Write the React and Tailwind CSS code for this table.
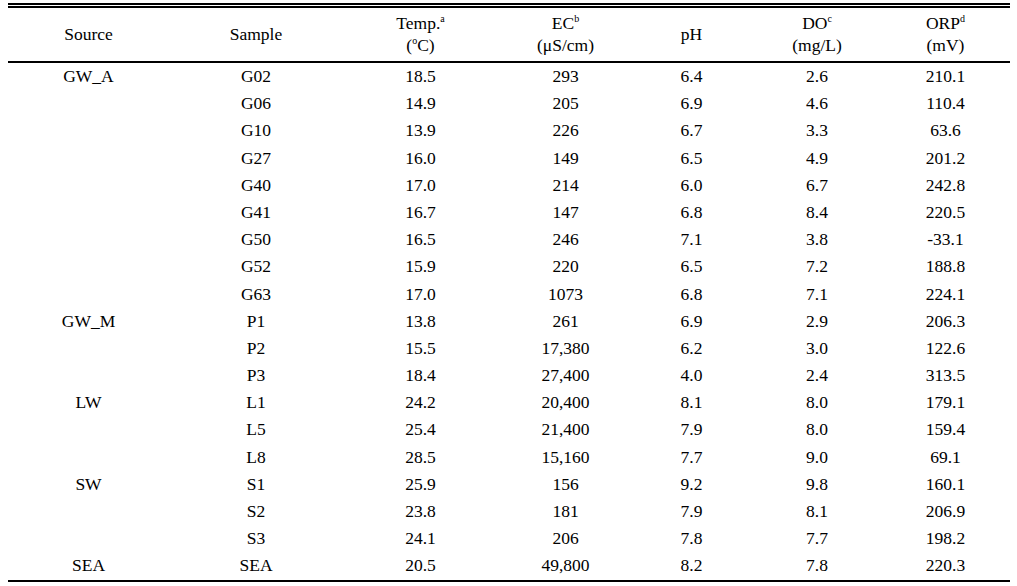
import React from "react";

const groups = [
  ["GW_A", [
    ["G02", "18.5", "293", "6.4", "2.6", "210.1"],
    ["G06", "14.9", "205", "6.9", "4.6", "110.4"],
    ["G10", "13.9", "226", "6.7", "3.3", "63.6"],
    ["G27", "16.0", "149", "6.5", "4.9", "201.2"],
    ["G40", "17.0", "214", "6.0", "6.7", "242.8"],
    ["G41", "16.7", "147", "6.8", "8.4", "220.5"],
    ["G50", "16.5", "246", "7.1", "3.8", "-33.1"],
    ["G52", "15.9", "220", "6.5", "7.2", "188.8"],
    ["G63", "17.0", "1073", "6.8", "7.1", "224.1"],
  ]],
  ["GW_M", [
    ["P1", "13.8", "261", "6.9", "2.9", "206.3"],
    ["P2", "15.5", "17,380", "6.2", "3.0", "122.6"],
    ["P3", "18.4", "27,400", "4.0", "2.4", "313.5"],
  ]],
  ["LW", [
    ["L1", "24.2", "20,400", "8.1", "8.0", "179.1"],
    ["L5", "25.4", "21,400", "7.9", "8.0", "159.4"],
    ["L8", "28.5", "15,160", "7.7", "9.0", "69.1"],
  ]],
  ["SW", [
    ["S1", "25.9", "156", "9.2", "9.8", "160.1"],
    ["S2", "23.8", "181", "7.9", "8.1", "206.9"],
    ["S3", "24.1", "206", "7.8", "7.7", "198.2"],
  ]],
  ["SEA", [
    ["SEA", "20.5", "49,800", "8.2", "7.8", "220.3"],
  ]],
];

const rows = [];
groups.forEach(([src, items]) => {
  items.forEach((r, i) => rows.push([i === 0 ? src : "", ...r]));
});

const cols = "grid grid-cols-[161px_174px_155px_135px_117px_134px_123px]";

function Sup({ children }) {
  return <sup className="text-[10px] top-[-7px]">{children}</sup>;
}

export default function App() {
  return (
    <div className="w-[1017px] h-[586px] bg-white text-black font-['Liberation_Serif','Times_New_Roman',serif] text-[17.5px]">
      <div className="ml-[8px] w-[1002px] pt-[3px] flex flex-col">
        <div className="h-[2px] bg-black" />
        <div className="h-[1px]" />
        <div className="h-[1.5px] bg-black" />
        <div className={`${cols} h-[53.5px] items-center text-center leading-[22px]`}>
          <div>Source</div>
          <div>Sample</div>
          <div className="flex flex-col">
            <span>Temp.<Sup>a</Sup></span>
            <span>(<Sup>o</Sup>C)</span>
          </div>
          <div className="flex flex-col">
            <span>EC<Sup>b</Sup></span>
            <span>(μS/cm)</span>
          </div>
          <div>pH</div>
          <div className="flex flex-col">
            <span>DO<Sup>c</Sup></span>
            <span>(mg/L)</span>
          </div>
          <div className="flex flex-col">
            <span>ORP<Sup>d</Sup></span>
            <span>(mV)</span>
          </div>
        </div>
        <div className="h-[2px] bg-black" />
        <div className="flex flex-col">
          {rows.map((r, i) => (
            <div key={i} className={`${cols} h-[27.2px] leading-[27.2px] text-center`}>
              {r.map((c, j) => (
                <div key={j}>{c}</div>
              ))}
            </div>
          ))}
        </div>
        <div className="h-[2.5px] bg-black" />
      </div>
    </div>
  );
}
